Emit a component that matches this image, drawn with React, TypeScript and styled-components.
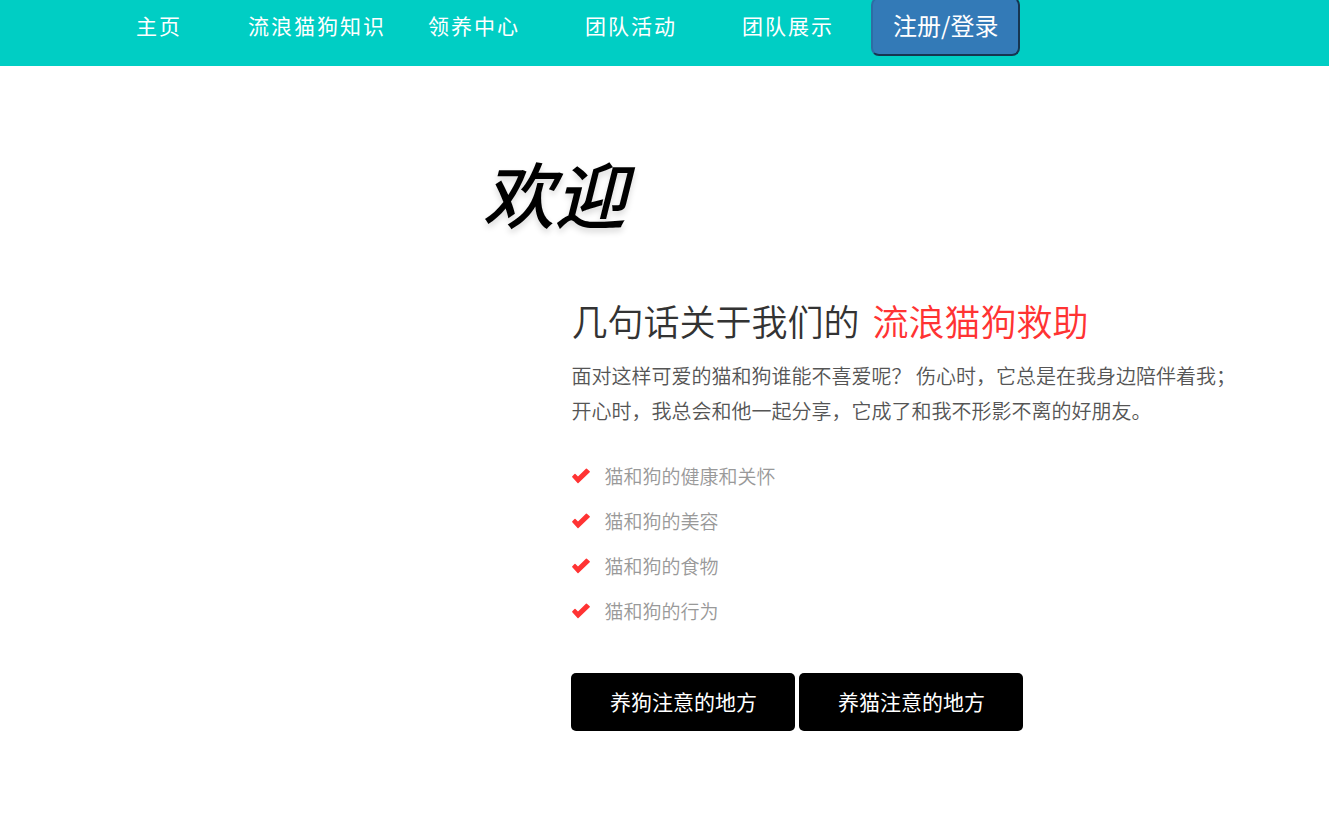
import React from "react";
import styled, { createGlobalStyle } from "styled-components";

const GlobalStyle = createGlobalStyle`
  *, *::before, *::after { box-sizing: border-box; }
  body {
    margin: 0;
    background: #fff;
    color: #333;
    font-family: "Noto Sans CJK SC", sans-serif;
  }
`;

const Header = styled.header`
  height: 66px;
  overflow: hidden;
  background: #00cec4;
`;

const Nav = styled.nav`
  display: grid;
  grid-template-columns: 112px 180px 157px 157px 129px auto;
  justify-content: start;
  align-items: start;
  padding-left: 136px;
`;

const NavLink = styled.a`
  padding-top: 10px;
  color: #fff;
  font-size: 21px;
  line-height: 30px;
  letter-spacing: 2px;
  text-decoration: none;
  white-space: nowrap;
`;

const LoginButton = styled.button`
  height: 59px;
  margin-top: -3px;
  padding: 0 20px 3px;
  border: 2px outset #2e6da4;
  border-radius: 8px;
  background: #337ab7;
  color: #fff;
  font-family: inherit;
  font-size: 24px;
  line-height: 34px;
  white-space: nowrap;
  cursor: pointer;
`;

const Title = styled.h1`
  margin: 0;
  padding: 74px 0 0 36.3%;
  color: #000;
  font-size: 72px;
  font-style: italic;
  font-weight: 500;
  line-height: 104px;
  text-shadow: 0 4px 6px rgba(0, 0, 0, 0.15);
`;

const About = styled.section`
  display: grid;
  grid-template-columns: 43fr 57fr;
  padding: 50px 0 64px;
`;

const AboutBody = styled.div`
  grid-column: 2;
`;

const Heading = styled.h2`
  margin: 0;
  font-size: 36px;
  font-weight: 350;
  line-height: 52px;
`;

const Accent = styled.span`
  margin-left: 5px;
  color: #ff3333;
`;

const Lead = styled.p`
  max-width: 672px;
  margin: 12px 0 0;
  color: #555;
  font-size: 20px;
  font-weight: 350;
  line-height: 35px;
`;

const CheckList = styled.ul`
  display: grid;
  gap: 16px;
  margin: 33px 0 0;
  padding: 0;
  list-style: none;
`;

const CheckItem = styled.li`
  display: flex;
  align-items: center;
  gap: 13px;
  color: #999;
  font-size: 19px;
  font-weight: 350;
  line-height: 29px;
`;

const Actions = styled.div`
  display: flex;
  flex-wrap: wrap;
  gap: 4px;
  margin-top: 48px;
`;

const ActionLink = styled.a`
  min-width: 224px;
  padding: 13px 38px 15px;
  border-radius: 5px;
  background: #000;
  color: #fff;
  font-size: 21px;
  line-height: 30px;
  text-align: center;
  text-decoration: none;
`;

const navItems = ["主页", "流浪猫狗知识", "领养中心", "团队活动", "团队展示"];
const topics = ["猫和狗的健康和关怀", "猫和狗的美容", "猫和狗的食物", "猫和狗的行为"];
const guides = ["养狗注意的地方", "养猫注意的地方"];

function CheckIcon() {
  return (
    <svg width="20" height="16" viewBox="0 0 20 16" aria-hidden="true">
      <path
        d="M1.3 8.3 3.5 6.1Q4 5.6 4.5 6.1L7 8.5 14.9 0.8Q15.4 0.3 15.9 0.8L18.7 3.3Q19.2 3.8 18.7 4.3L7.5 15.1Q7 15.6 6.5 15.1L1.3 9.3Q.8 8.8 1.3 8.3Z"
        fill="#ff3333"
      />
    </svg>
  );
}

export default function App() {
  return (
    <div lang="zh-CN">
      <GlobalStyle />
      <Header>
        <Nav>
          {navItems.map((item) => (
            <NavLink href="#" key={item}>{item}</NavLink>
          ))}
          <LoginButton type="button">注册/登录</LoginButton>
        </Nav>
      </Header>
      <main>
        <Title>欢迎</Title>
        <About>
          <AboutBody>
            <Heading>
              几句话关于我们的 <Accent>流浪猫狗救助</Accent>
            </Heading>
            <Lead>
              面对这样可爱的猫和狗谁能不喜爱呢？ 伤心时，它总是在我身边陪伴着我；开心时，我总会和他一起分享，它成了和我不形影不离的好朋友。
            </Lead>
            <CheckList>
              {topics.map((topic) => (
                <CheckItem key={topic}>
                  <CheckIcon />
                  {topic}
                </CheckItem>
              ))}
            </CheckList>
            <Actions>
              {guides.map((guide) => (
                <ActionLink href="#" key={guide}>{guide}</ActionLink>
              ))}
            </Actions>
          </AboutBody>
        </About>
      </main>
    </div>
  );
}
